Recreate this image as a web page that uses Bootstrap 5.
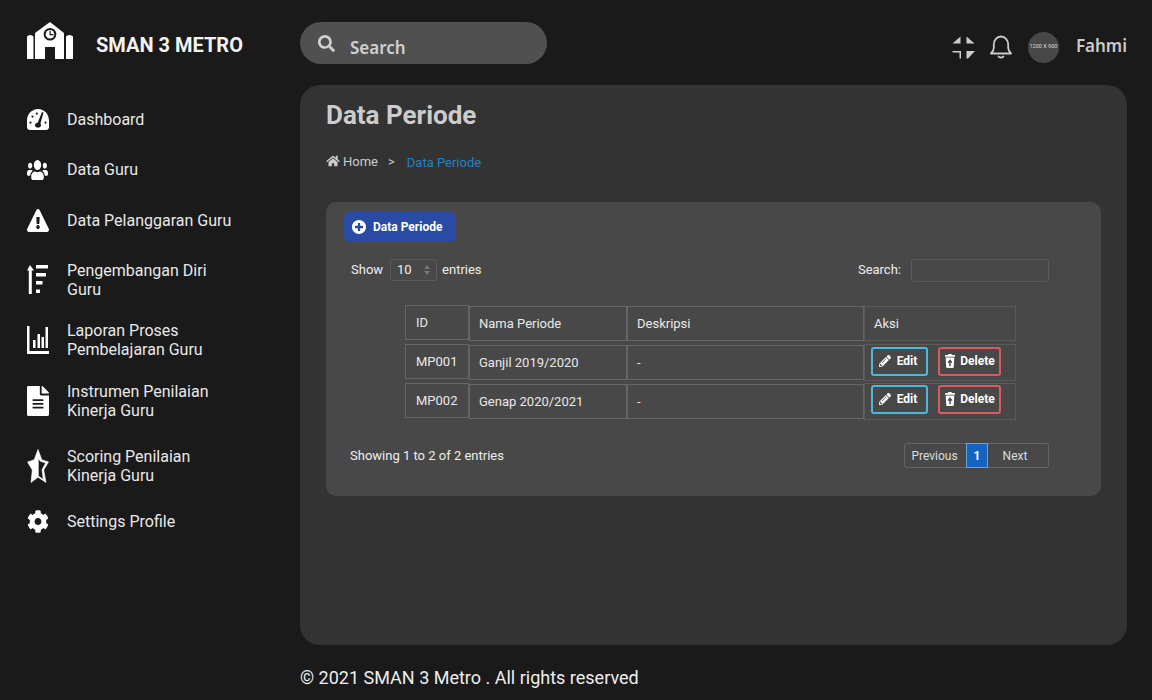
<!DOCTYPE html>
<html lang="id">
<head>
<meta charset="utf-8">
<title>Data Periode</title>
<link href="https://cdn.jsdelivr.net/npm/bootstrap@5.3.0/dist/css/bootstrap.min.css" rel="stylesheet">
<style>
html,body{height:700px;overflow:hidden}
body{background:#1a1a1a;font-family:Roboto,"Liberation Sans",sans-serif;color:#eee}
.app-side{width:300px;padding-left:27px}
.brand-row{height:85px;padding-top:22px;gap:23px}
.brand-name{font-size:20px;font-weight:700;color:#f2f2f2;line-height:24px;margin-top:11px}
.side-list{margin-top:25px;list-style:none;padding:0}
.side-item{font-size:16px;line-height:19px;color:#e8e8e8;display:flex;align-items:center;width:245px}
.side-ico{width:40px;flex:none;display:flex;align-items:center;height:19px}
.side-ico svg{display:block;fill:#fff;flex:none}
.m31{margin-top:31px}.m32{margin-top:32px}.m22{margin-top:22px}.m23{margin-top:23px}.m27{margin-top:27px}
.app-main{width:827px}
.top-row{height:85px;padding-top:22px}
.search-pill{width:247px;height:42px;background:#505050;border-radius:21px;padding-left:18px;gap:15px}
.search-pill span{font-family:"Noto Sans",sans-serif;font-size:17px;font-weight:600;color:#d0d0d0;margin-top:10px}
.top-tools{margin-top:3px;height:44px}
.avatar-dot{width:31px;height:31px;border-radius:50%;background:#484848;font-size:5.500px;color:#ddd;margin:0 17px 0 16px;line-height:1;white-space:nowrap}
.user-name{font-family:"Noto Sans",sans-serif;font-size:17px;font-weight:600;color:#ccc;line-height:22px;margin-top:-3px}
.gap-tool{margin-right:15px}
.panel-box{height:560px;background:#333;border-radius:20px;padding:15px 26px 0}
.page-title{font-size:26px;font-weight:700;color:#ccc;line-height:31px;margin:0}
.crumbs{margin-top:21px;height:20px;font-size:13px;color:#ccc;line-height:20px}
.crumbs svg{fill:#ccc;margin-right:3px;margin-top:-3px}
.crumbs .sep{margin:0 12px 0 10px}
.crumbs .now{color:#1e83c7;margin-top:1px}
.inner-box{background:#484848;border-radius:10px;height:294px;margin-top:30px;padding:10px 52px 0 18px}
.add-btn{height:30px;width:112px;background:#2a4ba5;border-radius:6px;color:#fff;font-size:12px;font-weight:700;gap:7px;padding-left:8px}
.dt-top{margin-top:16px;margin-left:7px;height:24px;font-size:13px;color:#eee}
.dt-select{width:47px;height:22px;border:1px solid #5c5c5c;border-radius:3px;margin:0 5px 0 7px;padding:0 6px;font-size:13px}
.dt-input{width:138px;height:23px;border:1px solid #5c5c5c;border-radius:3px;margin:1px 0 0 10px;background:transparent}
.data-tbl{margin:24px 0 0 61px;border-collapse:separate;border-spacing:0;font-size:13px;color:#e8e8e8;table-layout:fixed;width:611px}
.data-tbl th,.data-tbl td{padding:0;height:39px;vertical-align:top;font-weight:400}
.cell-box{height:35px;border:1px solid #666;padding:0 9px;display:flex;align-items:center}
.cell-id{margin-top:-1px;padding-left:10px}
.cell-act{border-color:#5a5a5a}
.cell-act-row{margin-top:-1px;height:37px;padding:0 6px 2px;gap:10px}
.cell-act-last{padding-bottom:4px}
.act-btn{height:29px;border:2px solid;border-radius:3px;background:transparent;color:#fff;font-size:12px;font-weight:700;padding:0 0 2px;gap:6px}
.act-edit{border-color:#4fb6dc;width:57px;padding-right:3px}
.act-del{border-color:#d95a60;width:63px;gap:5px;padding-left:1px}
.act-btn svg{fill:#fff}
.dt-bottom{margin:20px 0 0 6px;font-size:13px;color:#eee}
.pager-wrap{height:25px;width:145px;border:1px solid #666;border-radius:3px;font-size:12px;color:#ddd}
.pager-wrap span{height:100%}
.pg-prev{width:61px;padding-right:2px}
.pg-on{width:22px;margin:-1px 0;height:25px!important;background:#1565c0;border:1px solid #64a5dc;color:#fff;font-weight:700}
.pg-next{flex:1;padding-right:6px}
.foot-text{font-size:18px;color:#eee;line-height:22px;margin-top:22px}
</style>
</head>
<body>
<div class="d-flex">
  <aside class="app-side">
    <div class="brand-row d-flex">
      <svg width="46" height="37" viewBox="0 0 46 37" fill="#fff"><path d="M0 15c0-1 1.500-2 3.200-2s3.300 1 3.300 2v22H0zM39 15c0-1 1.500-2 3.500-2s3.500 1 3.500 2v22h-7z"/><path d="M8 11 23 0l14 11V37H28V25h-10v12H8z"/><circle cx="23" cy="12.300" r="6.300" fill="#1a1a1a"/><circle cx="23" cy="12.300" r="4.300" fill="#fff"/><path d="M22.500 8.800h1.200v3.200h2.800v1.200h-4z" fill="#1a1a1a"/></svg>
      <div class="brand-name">SMAN 3 METRO</div>
    </div>
    <ul class="side-list">
      <li class="side-item"><span class="side-ico"><svg width="22" height="21" viewBox="0 0 22 21"><path fill-rule="evenodd" d="M11 0C4.900 0 0 5 0 11.500V18c0 1.700 1.300 3 3 3h16c1.700 0 3-1.300 3-3v-6.500C22 5 17.100 0 11 0zM9.800 3.500a1.100 1.100 0 1 1 0 2.200 1.100 1.100 0 0 1 0-2.200zM5.500 6.500a1.100 1.100 0 1 1 0 2.200 1.100 1.100 0 0 1 0-2.200zM3.500 12.500a1.100 1.100 0 1 1 0 2.200 1.100 1.100 0 0 1 0-2.200zM18.500 12.500a1.100 1.100 0 1 1 0 2.200 1.100 1.100 0 0 1 0-2.200zM15 3l1.500.4L13.400 14.500a2.400 2.400 0 0 1 .6 1.700c0 1.400-1.300 2.400-3 2.400s-3-1-3-2.400c0-1.300 1.100-2.200 2.700-2.400z"/></svg></span>Dashboard</li>
      <li class="side-item m31"><span class="side-ico"><svg width="21" height="20" viewBox="0 32 640 448" preserveAspectRatio="none"><path d="M96 224c35.300 0 64-28.700 64-64s-28.700-64-64-64-64 28.700-64 64 28.700 64 64 64zm448 0c35.300 0 64-28.700 64-64s-28.700-64-64-64-64 28.700-64 64 28.700 64 64 64zm32 32h-64c-17.600 0-33.500 7.100-45.100 18.600 40.300 22.100 68.900 62 75.100 109.400h66c17.700 0 32-14.300 32-32v-32c0-35.300-28.700-64-64-64zm-256 0c61.900 0 112-50.100 112-112S381.900 32 320 32 208 82.100 208 144s50.100 112 112 112zm76.800 32h-8.300c-20.800 10-43.900 16-68.500 16s-47.600-6-68.500-16h-8.300C179.600 288 128 339.600 128 403.200V432c0 26.500 21.500 48 48 48h288c26.500 0 48-21.500 48-48v-28.800c0-63.600-51.600-115.200-115.200-115.200zm-223.700-13.400C161.500 263.100 145.600 256 128 256H64c-35.300 0-64 28.700-64 64v32c0 17.700 14.300 32 32 32h65.900c6.300-47.400 34.900-87.300 75.200-109.400z"/></svg></span>Data Guru</li>
      <li class="side-item m32"><span class="side-ico"><svg width="22" height="23" viewBox="0 0 576 512" preserveAspectRatio="none"><path d="M569.517 440.013C587.975 472.007 564.806 512 527.940 512H48.054c-36.937 0-59.999-40.055-41.577-71.987L246.423 24.035c18.467-32.009 64.720-31.951 83.154 0l239.940 416.018zM288 354c-25.405 0-46 20.595-46 46s20.595 46 46 46 46-20.595 46-46-20.595-46-46-46zm-43.673-165.346l7.418 136c.347 6.364 5.609 11.346 11.982 11.346h48.546c6.373 0 11.635-4.982 11.982-11.346l7.418-136c.375-6.874-5.098-12.654-11.982-12.654h-63.383c-6.884 0-12.356 5.780-11.981 12.654z"/></svg></span>Data Pelanggaran Guru</li>
      <li class="side-item m31"><span class="side-ico"><svg width="22" height="30" viewBox="0 0 22 30"><path d="M3 0l4 5.500H4.800V29H1.800V5.500H0zM9 0h12v3.500H9zM9 8h10v3.500H9zM9 16h6.500v3.500H9zM9 24.500h4V28H9z"/></svg></span>Pengembangan Diri<br>Guru</li>
      <li class="side-item m22"><span class="side-ico"><svg width="22" height="28" viewBox="0 0 22 28"><path d="M0 0h2.500v25H22v3H0zM6 14h2.500v8H6zM10.500 8h2.500v14h-2.500zM14.500 11H17v11h-2.500zM18.500 1H21v21h-2.500z"/></svg></span>Laporan Proses<br>Pembelajaran Guru</li>
      <li class="side-item m23"><span class="side-ico"><svg width="22" height="30" viewBox="0 0 384 512" preserveAspectRatio="none"><path d="M224 136V0H24C10.700 0 0 10.700 0 24v464c0 13.300 10.700 24 24 24h336c13.300 0 24-10.700 24-24V160H248c-13.200 0-24-10.800-24-24zm64 236c0 6.600-5.400 12-12 12H108c-6.600 0-12-5.400-12-12v-8c0-6.600 5.400-12 12-12h168c6.600 0 12 5.400 12 12v8zm0-64c0 6.600-5.400 12-12 12H108c-6.600 0-12-5.400-12-12v-8c0-6.600 5.400-12 12-12h168c6.600 0 12 5.400 12 12v8zm0-72v8c0 6.600-5.400 12-12 12H108c-6.600 0-12-5.400-12-12v-8c0-6.600 5.400-12 12-12h168c6.600 0 12 5.400 12 12zm96-114.100v6.100H256V0h6.100c6.400 0 12.500 2.500 17 7l97.900 98c4.500 4.500 7 10.600 7 16.900z"/></svg></span>Instrumen Penilaian<br>Kinerja Guru</li>
      <li class="side-item m27"><span class="side-ico"><svg width="22" height="34" viewBox="0 0 22 34"><path fill-rule="evenodd" stroke="#fff" stroke-width=".6" stroke-linejoin="round" d="M11 .5l3.800 10.300 6.700 2.200-4.800 8L19 33.500l-8-5.300-7 5.300 1.300-12.500L.5 13l6.700-2.200zM11.300 9.500v17.600l5 3.300-1.300-9.600 3.700-6.800-5.300-1.700z"/></svg></span>Scoring Penilaian<br>Kinerja Guru</li>
      <li class="side-item m27"><span class="side-ico"><svg width="22" height="23" viewBox="0 0 512 512" preserveAspectRatio="none"><path d="M487.400 315.700l-42.600-24.600c4.300-23.200 4.300-47 0-70.200l42.600-24.600c4.900-2.800 7.100-8.600 5.500-14-11.100-35.600-30-67.800-54.700-94.600-3.800-4.100-10-5.100-14.800-2.300L380.800 110c-17.900-15.400-38.500-27.300-60.800-35.100V25.800c0-5.600-3.900-10.500-9.400-11.700-36.700-8.200-74.300-7.800-109.200 0-5.500 1.200-9.400 6.100-9.400 11.700V75c-22.200 7.900-42.800 19.800-60.800 35.100L88.700 85.500c-4.900-2.800-11-1.900-14.800 2.300-24.700 26.700-43.600 58.900-54.700 94.600-1.700 5.400.6 11.200 5.500 14L67.300 221c-4.300 23.200-4.300 47 0 70.200l-42.600 24.600c-4.900 2.800-7.100 8.600-5.500 14 11.100 35.600 30 67.800 54.700 94.600 3.800 4.100 10 5.100 14.800 2.300l42.600-24.600c17.900 15.400 38.500 27.300 60.800 35.100v49.200c0 5.600 3.900 10.500 9.400 11.700 36.700 8.200 74.300 7.800 109.200 0 5.500-1.200 9.400-6.100 9.400-11.700v-49.200c22.200-7.900 42.800-19.800 60.800-35.100l42.600 24.600c4.900 2.800 11 1.900 14.800-2.300 24.700-26.700 43.600-58.900 54.700-94.600 1.500-5.500-.7-11.300-5.600-14.100zM256 336c-44.100 0-80-35.900-80-80s35.900-80 80-80 80 35.900 80 80-35.900 80-80 80z"/></svg></span>Settings Profile</li>
    </ul>
  </aside>
  <main class="app-main">
    <div class="top-row d-flex justify-content-between">
      <div class="search-pill d-flex align-items-center">
        <svg width="17" height="17" viewBox="0 0 512 512" fill="#d0d0d0"><path d="M505 442.700L405.300 343c-4.500-4.500-10.600-7-17-7H372c27.600-35.300 44-79.700 44-128C416 93.100 322.900 0 208 0S0 93.100 0 208s93.100 208 208 208c48.300 0 92.700-16.400 128-44v16.300c0 6.400 2.500 12.500 7 17l99.700 99.700c9.400 9.400 24.600 9.400 33.900 0l28.300-28.300c9.400-9.400 9.400-24.600.1-34zM208 336c-70.700 0-128-57.200-128-128 0-70.700 57.200-128 128-128 70.700 0 128 57.200 128 128 0 70.700-57.200 128-128 128z"/></svg>
        <span>Search</span>
      </div>
      <div class="top-tools d-flex align-items-center">
        <svg class="gap-tool" width="23" height="23" viewBox="0 0 23 23" fill="#ccc"><path d="M8.500 .5V7.500H.5z"/><path d="M14.500 .5l8 7h-8z"/><path d="M.5 15h8.500v7.500H7.500V16.500H.5z"/><path d="M14.500 15h8v.5l-6.500 7H14.500z"/></svg>
        <svg width="22" height="24" viewBox="0 0 22 24" fill="none" stroke="#ccc" stroke-width="1.800"><path d="M1 18.500h20c-1.600-1.600-2.800-3-2.800-5.500V9.500C18.200 5 15 1.500 11 1.500S3.800 5 3.800 9.500V13c0 2.500-1.200 3.900-2.800 5.500z" stroke-linejoin="round"/><path d="M8.500 21.500c.8 1.300 4.200 1.300 5 0" stroke-linecap="round"/></svg>
        <div class="avatar-dot d-flex align-items-center justify-content-center">1200 X 900</div>
        <div class="user-name">Fahmi</div>
      </div>
    </div>
    <section class="panel-box">
      <h1 class="page-title">Data Periode</h1>
      <div class="crumbs d-flex">
        <svg width="14" height="12" viewBox="0 0 576 512" class="align-self-center"><path d="M280.370 148.260L96 300.110V464a16 16 0 0 0 16 16l112.060-.29a16 16 0 0 0 15.920-16V368a16 16 0 0 1 16-16h64a16 16 0 0 1 16 16v95.640a16 16 0 0 0 16 16.050L464 480a16 16 0 0 0 16-16V300L295.670 148.260a12.190 12.190 0 0 0-15.300 0zM571.600 251.470L488 182.560V44.050a12 12 0 0 0-12-12h-56a12 12 0 0 0-12 12v72.610L318.470 43a48 48 0 0 0-61 0L4.340 251.470a12 12 0 0 0-1.600 16.900l25.500 31A12 12 0 0 0 45.150 301l235.220-193.740a12.190 12.190 0 0 1 15.300 0L530.900 301a12 12 0 0 0 16.900-1.600l25.500-31a12 12 0 0 0-1.700-16.930z"/></svg>
        <span>Home</span><span class="sep">&gt;</span><span class="now">Data Periode</span>
      </div>
      <div class="inner-box">
        <div class="add-btn d-flex align-items-center">
          <svg width="14" height="14" viewBox="8 8 496 496" fill="#fff"><path d="M256 8C119 8 8 119 8 256s111 248 248 248 248-111 248-248S393 8 256 8zm144 276c0 6.600-5.400 12-12 12h-92v92c0 6.600-5.400 12-12 12h-56c-6.600 0-12-5.400-12-12v-92h-92c-6.600 0-12-5.400-12-12v-56c0-6.600 5.400-12 12-12h92v-92c0-6.600 5.400-12 12-12h56c6.600 0 12 5.400 12 12v92h92c6.600 0 12 5.400 12 12v56z"/></svg>
          Data Periode
        </div>
        <div class="dt-top d-flex align-items-center justify-content-between">
          <div class="d-flex align-items-center">Show
            <div class="dt-select d-flex align-items-center justify-content-between">10
              <svg width="6" height="10" viewBox="0 0 6 10" fill="#777"><path d="M3 0l3 4H0zM3 10L0 6h6z"/></svg>
            </div>entries</div>
          <div class="d-flex align-items-center">Search:<input class="dt-input" type="text" aria-label="Search"></div>
        </div>
        <table class="data-tbl">
          <colgroup><col style="width:64px"><col style="width:158px"><col style="width:237px"><col style="width:152px"></colgroup>
          <thead><tr>
            <th><div class="cell-box cell-id">ID</div></th>
            <th><div class="cell-box">Nama Periode</div></th>
            <th><div class="cell-box">Deskripsi</div></th>
            <th><div class="cell-box cell-act">Aksi</div></th>
          </tr></thead>
          <tbody>
            <tr>
              <td><div class="cell-box cell-id">MP001</div></td>
              <td><div class="cell-box">Ganjil 2019/2020</div></td>
              <td><div class="cell-box">-</div></td>
              <td><div class="cell-box cell-act cell-act-row">
                <button class="act-btn act-edit d-flex align-items-center justify-content-center" type="button"><svg width="12" height="12" viewBox="0 0 512 512"><path d="M497.900 142.100l-46.100 46.100c-4.700 4.700-12.300 4.700-17 0l-111-111c-4.700-4.700-4.700-12.300 0-17l46.100-46.100c18.700-18.700 49.100-18.700 67.900 0l60.100 60.100c18.800 18.700 18.800 49.100 0 67.900zM284.200 99.800L21.600 362.400.4 483.900c-2.900 16.400 11.400 30.600 27.800 27.800l121.500-21.300 262.600-262.600c4.700-4.700 4.700-12.300 0-17l-111-111c-4.800-4.700-12.400-4.700-17.100 0zM124.100 339.900c-5.500-5.500-5.500-14.300 0-19.800l154-154c5.500-5.500 14.300-5.500 19.800 0s5.500 14.300 0 19.800l-154 154c-5.500 5.500-14.300 5.500-19.800 0zM88 424h48v36.300l-64.500 11.300-31.100-31.100L51.700 376H88v48z"/></svg>Edit</button>
                <button class="act-btn act-del d-flex align-items-center justify-content-center" type="button"><svg width="10" height="14" viewBox="0 0 448 512" preserveAspectRatio="none"><path d="M53.200 467a48 48 0 0 0 47.900 45h245.800a48 48 0 0 0 47.900-45L416 128H32zm70.110-175.800l89.380-94.260a15.410 15.410 0 0 1 22.620 0l89.380 94.260c10.080 10.620 2.940 28.800-11.320 28.800H256v112a16 16 0 0 1-16 16h-32a16 16 0 0 1-16-16V320h-57.370c-14.260 0-21.400-18.180-11.320-28.800zM432 32H312l-9.400-18.700A24 24 0 0 0 281.100 0H166.800a23.720 23.720 0 0 0-21.400 13.300L136 32H16A16 16 0 0 0 0 48v32a16 16 0 0 0 16 16h416a16 16 0 0 0 16-16V48a16 16 0 0 0-16-16z"/></svg>Delete</button>
              </div></td>
            </tr>
            <tr>
              <td><div class="cell-box cell-id">MP002</div></td>
              <td><div class="cell-box">Genap 2020/2021</div></td>
              <td><div class="cell-box">-</div></td>
              <td><div class="cell-box cell-act cell-act-row cell-act-last">
                <button class="act-btn act-edit d-flex align-items-center justify-content-center" type="button"><svg width="12" height="12" viewBox="0 0 512 512"><path d="M497.900 142.100l-46.100 46.100c-4.700 4.700-12.300 4.700-17 0l-111-111c-4.700-4.700-4.700-12.300 0-17l46.100-46.100c18.700-18.700 49.100-18.700 67.900 0l60.100 60.100c18.800 18.700 18.800 49.100 0 67.900zM284.200 99.800L21.600 362.400.4 483.900c-2.900 16.400 11.400 30.600 27.800 27.800l121.500-21.300 262.600-262.600c4.700-4.700 4.700-12.300 0-17l-111-111c-4.800-4.700-12.400-4.700-17.100 0zM124.100 339.900c-5.500-5.500-5.500-14.300 0-19.800l154-154c5.500-5.500 14.300-5.500 19.800 0s5.500 14.300 0 19.800l-154 154c-5.500 5.500-14.300 5.500-19.800 0zM88 424h48v36.300l-64.500 11.300-31.100-31.100L51.700 376H88v48z"/></svg>Edit</button>
                <button class="act-btn act-del d-flex align-items-center justify-content-center" type="button"><svg width="10" height="14" viewBox="0 0 448 512" preserveAspectRatio="none"><path d="M53.200 467a48 48 0 0 0 47.900 45h245.800a48 48 0 0 0 47.900-45L416 128H32zm70.110-175.800l89.380-94.260a15.410 15.410 0 0 1 22.620 0l89.380 94.260c10.080 10.620 2.940 28.800-11.320 28.800H256v112a16 16 0 0 1-16 16h-32a16 16 0 0 1-16-16V320h-57.370c-14.260 0-21.400-18.180-11.320-28.800zM432 32H312l-9.400-18.700A24 24 0 0 0 281.100 0H166.800a23.720 23.720 0 0 0-21.400 13.300L136 32H16A16 16 0 0 0 0 48v32a16 16 0 0 0 16 16h416a16 16 0 0 0 16-16V48a16 16 0 0 0-16-16z"/></svg>Delete</button>
              </div></td>
            </tr>
          </tbody>
        </table>
        <div class="dt-bottom d-flex align-items-center justify-content-between">
          <div>Showing 1 to 2 of 2 entries</div>
          <div class="pager-wrap d-flex align-items-center">
            <span class="pg-prev d-flex align-items-center justify-content-center">Previous</span>
            <span class="pg-on d-flex align-items-center justify-content-center">1</span>
            <span class="pg-next d-flex align-items-center justify-content-center">Next</span>
          </div>
        </div>
      </div>
    </section>
    <footer class="foot-text">© 2021 SMAN 3 Metro . All rights reserved</footer>
  </main>
</div>
<script src="https://cdn.jsdelivr.net/npm/bootstrap@5.3.0/dist/js/bootstrap.bundle.min.js"></script>
</body>
</html>
